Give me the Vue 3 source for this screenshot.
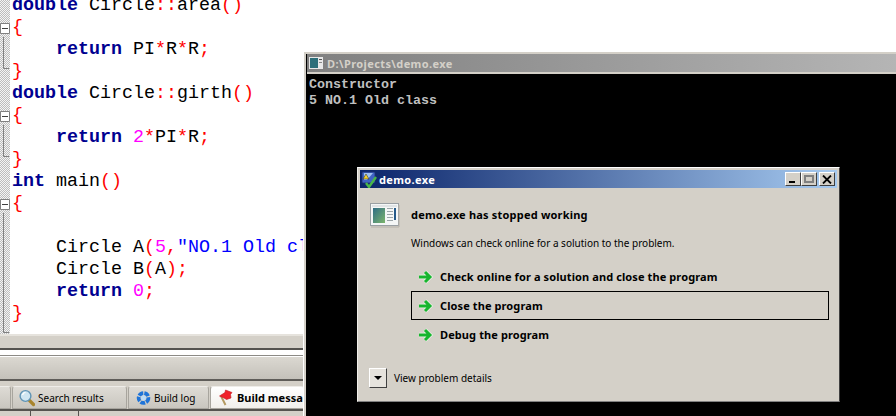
<script setup>
const options = [
  { text: 'Check online for a solution and close the program', focus: false },
  { text: 'Close the program', focus: true },
  { text: 'Debug the program', focus: false },
]
</script>

<template>
  <div class="screen">
    <div class="ide">
      <div class="editor">
        <div class="gutter">
          <svg width="10" height="334" viewBox="0 0 10 334" fill="none">
            <g stroke="#808080">
              <path d="M0.5 23.5H9.5V33.5H0.5Z" fill="#fff" />
              <path d="M2 28.5H8" stroke="#404040" />
              <path d="M3.5 37V68.5H9" />
              <path d="M0.5 111.5H9.5V121.5H0.5Z" fill="#fff" />
              <path d="M2 116.5H8" stroke="#404040" />
              <path d="M3.5 125V156.5H9" />
              <path d="M0.5 199.5H9.5V209.5H0.5Z" fill="#fff" />
              <path d="M2 204.5H8" stroke="#404040" />
              <path d="M3.5 213V332.5H9" />
            </g>
          </svg>
        </div>
        <pre class="code"><span class="k">double</span> Circle<span class="p">::</span>area<span class="p">()</span>
<span class="p">{</span>
    <span class="k">return</span> PI<span class="p">*</span>R<span class="p">*</span>R<span class="p">;</span>
<span class="p">}</span>
<span class="k">double</span> Circle<span class="p">::</span>girth<span class="p">()</span>
<span class="p">{</span>
    <span class="k">return</span> <span class="n">2</span><span class="p">*</span>PI<span class="p">*</span>R<span class="p">;</span>
<span class="p">}</span>
<span class="k">int</span> main<span class="p">()</span>
<span class="p">{</span>

    Circle A<span class="p">(</span><span class="n">5</span><span class="p">,</span><span class="s">"NO.1 Old class"</span><span class="p">);</span>
    Circle B<span class="p">(</span>A<span class="p">);</span>
    <span class="k">return</span> <span class="n">0</span><span class="p">;</span>
<span class="p">}</span></pre>
      </div>
      <div class="splitter"></div>
      <div class="panel-head"></div>
      <div class="tabs">
        <div class="tab stub"></div>
        <div class="tab search">
          <svg width="16" height="18" viewBox="0 0 16 18">
            <path d="M10.5 11.5L14.5 15.5" stroke="#a8842c" stroke-width="3.2" stroke-linecap="round" />
            <circle cx="6.5" cy="7" r="5.4" fill="#cfe6f2" stroke="#5f93b4" stroke-width="1.4" />
            <path d="M3.5 6A3.4 3.4 0 0 1 6.5 3.4" stroke="#fff" stroke-width="1.4" fill="none" />
          </svg>
          <span>Search results</span>
        </div>
        <div class="tab log">
          <svg width="15" height="16" viewBox="0 0 16 16">
            <circle cx="8" cy="8" r="5.2" fill="none" stroke="#1f74d8" stroke-width="4" stroke-dasharray="5 1.2" />
            <circle cx="8" cy="8" r="2.6" fill="#bcdcf7" />
          </svg>
          <span>Build log</span>
        </div>
        <div class="tab active">
          <svg width="16" height="18" viewBox="0 0 16 18">
            <path d="M3 7L7.5 16" stroke="#b49a62" stroke-width="2" />
            <path d="M1.5 7L7 3.5L7.5 1L14 3.5L12.5 5.5L13 9L8.5 10.5L6 9Z" fill="#f0222a" stroke="#c01820" stroke-width=".6" />
          </svg>
          <b>Build messages</b>
        </div>
      </div>
      <div class="status">
        <i class="cell c1"></i><i class="cell c2"></i><i class="cell c3"></i>
      </div>
    </div>

    <div class="console">
      <div class="con-title">
        <svg width="14" height="12" viewBox="0 0 14 12">
          <rect width="14" height="12" fill="#e8e8e8" />
          <rect x="1" y="1" width="8" height="10" fill="#2d6f7a" />
          <rect x="10" y="2" width="3" height="1" fill="#555" />
          <rect x="10" y="5" width="3" height="1" fill="#888" />
        </svg>
        <span>D:\Projects\demo.exe</span>
      </div>
      <pre class="con-text">Constructor
5 NO.1 Old class</pre>
    </div>

    <div class="dialog">
      <div class="dlg-title">
        <svg width="17" height="17" viewBox="0 0 17 17">
          <rect x="1" y="1" width="13" height="11" rx="1" fill="#3f63c4" stroke="#1d2f6e" stroke-width=".8" />
          <path d="M3 2H12L6 9H3Z" fill="#9fc0ef" />
          <path d="M5 3L8 8H2Z" fill="#f2cf2e" stroke="#222" stroke-width=".5" />
          <path d="M5 12L8 16L15 6" fill="none" stroke="#49b649" stroke-width="2.4" />
        </svg>
        <span class="dlg-name">demo.exe</span>
        <div class="caption-btns">
          <button class="cap"><i class="min"></i></button>
          <button class="cap"><i class="max"></i></button>
          <button class="cap close">
            <svg width="10" height="9" viewBox="0 0 10 9">
              <path d="M1 0.5L9 8.5M9 0.5L1 8.5" stroke="#000" stroke-width="1.8" fill="none" />
            </svg>
          </button>
        </div>
      </div>
      <div class="dlg-body">
        <div class="head-row">
          <svg class="app-icon" width="31" height="26" viewBox="0 0 31 26">
            <rect x="1.5" y="1.5" width="28" height="22" fill="#f4f6f6" stroke="#9aa0a4" />
            <rect x="3" y="3" width="25" height="2" fill="#dfe3e5" />
            <defs>
              <linearGradient id="scr" x1="0" y1="0" x2="1" y2="1">
                <stop offset="0" stop-color="#2f6d86" />
                <stop offset="1" stop-color="#7cb56c" />
              </linearGradient>
            </defs>
            <rect x="4" y="6" width="12" height="15" fill="url(#scr)" />
            <g fill="#9aa4a8">
              <rect x="18" y="6" width="6" height="1" /><rect x="18" y="9" width="6" height="1" />
              <rect x="18" y="12" width="6" height="1" /><rect x="18" y="15" width="6" height="1" />
              <rect x="18" y="18" width="6" height="1" />
            </g>
            <rect x="25" y="6" width="2" height="12" fill="#24598a" />
            <path d="M2 25H30V3" stroke="#b4b0a8" fill="none" />
          </svg>
          <h1>demo.exe has stopped working</h1>
        </div>
        <p class="desc">Windows can check online for a solution to the problem.</p>
        <ul class="opts">
          <li v-for="o in options" :key="o.text" class="opt" :class="{ focus: o.focus }">
            <svg width="15" height="14" viewBox="0 0 15 14" fill="none">
              <path d="M1 7H11M7 2L12 7L7 12" stroke="#eef6ea" stroke-width="4.4" />
              <path d="M1 7H11M7 2L12 7L7 12" stroke="#17b52e" stroke-width="3" />
            </svg>
            <span>{{ o.text }}</span>
          </li>
        </ul>
        <div class="details">
          <button class="chev"><i></i></button>
          <span>View problem details</span>
        </div>
      </div>
    </div>
  </div>
</template>

<style>
html, body { margin: 0; background: #fff; overflow: hidden; }
</style>

<style scoped>
.screen {
  position: relative;
  width: 896px;
  height: 416px;
  overflow: hidden;
  background: #fff;
  font-family: "Noto Sans", "DejaVu Sans", sans-serif;
}
.ide {
  display: flex;
  flex-direction: column;
  width: 304px;
  height: 416px;
  background: #d4d0c8;
}
.editor {
  display: flex;
  height: 334px;
  flex: none;
  overflow: hidden;
  background: #fff;
  border-bottom: 2px solid #e6e3dd;
}
.gutter {
  width: 10px;
  flex: none;
  background: repeating-conic-gradient(#bdbdbd 0 25%, #f4f4f4 0 50%) 0 0 / 2px 2px;
}
.gutter svg { display: block; }
.code {
  margin: -5px 0 0 2px;
  font: 18.33px/22px "Liberation Mono", monospace;
  color: #000;
  white-space: pre;
}
.k { color: #000090; font-weight: 700; }
.p { color: #ff0000; }
.n { color: #ff00ff; }
.s { color: #0000ff; }
.splitter {
  height: 5px;
  margin-top: 12px;
  flex: none;
  border-top: 2px solid #55534f;
  border-bottom: 1px solid #8c8a85;
  background: #fff;
}
.panel-head {
  height: 22px;
  flex: none;
  background: linear-gradient(#dbd8d1, #c4c1ba);
  border-top: 1px solid #fff;
  border-bottom: 2px solid #5f5d59;
}
.tabs {
  display: flex;
  height: 23px;
  flex: none;
  padding-top: 5px;
  gap: 1px;
  border-bottom: 2px solid #55534f;
}
.tab {
  display: flex;
  align-items: center;
  gap: 3px;
  height: 23px;
  box-sizing: border-box;
  border: 1px solid #a8a59e;
  border-top-color: #eeece8;
  border-radius: 3px 3px 0 0;
  background: linear-gradient(#dedbd5, #c9c6bf);
  font-size: 10px;
  color: #000;
  white-space: nowrap;
  overflow: hidden;
  flex: none;
}
.tab svg { flex: none; }
.stub { width: 11px; border-left: 0; border-radius: 0 3px 0 0; }
.search { width: 115px; padding-left: 6px; }
.log { width: 81px; padding-left: 7px; }
.active {
  width: 94px;
  padding-left: 7px;
  background: linear-gradient(#fff, #f1efeb);
  border-right: 0;
  font-size: 11px;
}
.active b { font-weight: 700; }
.status {
  display: flex;
  height: 8px;
  flex: none;
}
.cell { display: block; height: 8px; border-right: 1px solid #55534f; }
.c1 { width: 30px; }
.c2 { width: 47px; }
.c3 { flex: 1; border: 0; }

.console {
  position: absolute;
  left: 303px;
  top: 51px;
  width: 593px;
  height: 365px;
  box-sizing: border-box;
  background: #000;
  border-left: 1px solid #fff;
  border-top: 1px solid #fff;
  padding: 2px 0 0 3px;
  box-shadow: inset 2px 2px 0 #d4d0c8;
}
.con-title {
  display: flex;
  align-items: center;
  gap: 4px;
  height: 18px;
  padding-left: 2px;
  background: linear-gradient(90deg, #808080, #b5b5b5);
  border-bottom: 2px solid #d4d0c8;
  font-size: 11px;
  font-weight: 700;
  letter-spacing: .4px;
  color: #d4d0c8;
}
.con-title svg { flex: none; }
.con-text {
  margin: 3px 0 0 2px;
  font: 700 13.33px/16px "Liberation Mono", monospace;
  color: #c0c0c0;
}

.dialog {
  position: absolute;
  left: 357px;
  top: 167px;
  width: 483px;
  height: 235px;
  box-sizing: border-box;
  display: flex;
  flex-direction: column;
  padding: 2px;
  background: #d4d0c8;
  border: 1px solid;
  border-color: #fff #404040 #808080 #f0eee9;
}
.dlg-title {
  display: flex;
  align-items: center;
  gap: 1px;
  height: 18px;
  flex: none;
  padding-left: 1px;
  background: linear-gradient(90deg, #0a246a, #a6caf0);
  color: #fff;
  font-size: 11px;
  font-weight: 700;
}
.dlg-title > svg { flex: none; }
.dlg-name { flex: 1; letter-spacing: .35px; }
.caption-btns { display: flex; margin-right: 2px; }
.cap {
  width: 16px;
  height: 14px;
  padding: 0;
  display: flex;
  align-items: center;
  justify-content: center;
  background: #d4d0c8;
  border: 1px solid;
  border-color: #fff #404040 #404040 #fff;
  position: relative;
}
.close { margin-left: 2px; }
.min { display: block; width: 6px; height: 2px; background: #000; margin: 6px 3px 0 0; }
.max { display: block; width: 10px; height: 8px; border: 2px solid #808080; box-sizing: border-box; }
.dlg-body {
  flex: 1;
  display: flex;
  flex-direction: column;
  padding: 14px 0 0 9px;
}
.head-row { display: flex; align-items: center; gap: 11px; height: 26px; }
.app-icon { flex: none; }
h1 { margin: 0; font-size: 11px; font-weight: 700; letter-spacing: .2px; color: #000; position: relative; top: -1px; }
.desc { margin: 7px 0 0 42px; font-size: 10px; line-height: 16px; color: #000; }
.opts { list-style: none; margin: 11px 0 0 42px; padding: 0; width: 418px; }
.opt {
  display: flex;
  align-items: center;
  gap: 7px;
  height: 29px;
  box-sizing: border-box;
  padding-left: 7px;
  font-size: 11px;
  font-weight: 700;
  letter-spacing: .1px;
  color: #000;
}
.opt svg { flex: none; }
.focus { border: 1px solid #000; padding-left: 6px; }
.details {
  display: flex;
  align-items: center;
  gap: 7px;
  margin-top: 19px;
  font-size: 10px;
  color: #000;
}
.chev {
  width: 18px;
  height: 20px;
  padding: 0;
  display: flex;
  align-items: center;
  justify-content: center;
  background: #e6e3dd;
  border: 1px solid;
  border-color: #fff #404040 #404040 #fff;
}
.chev i {
  display: block;
  width: 0;
  height: 0;
  border-left: 4px solid transparent;
  border-right: 4px solid transparent;
  border-top: 4px solid #000;
}
</style>
